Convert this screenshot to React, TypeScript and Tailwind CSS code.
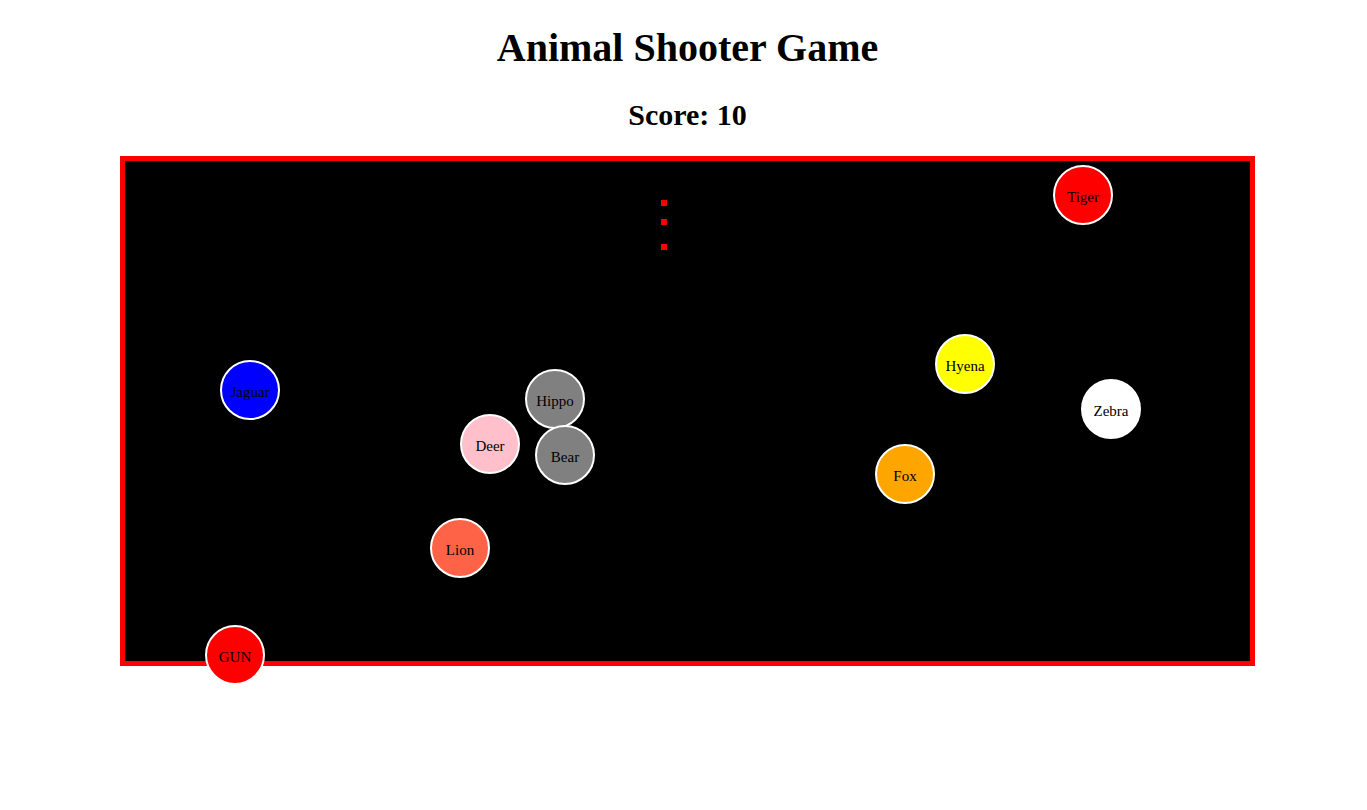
const animals = [
  { name: "Tiger", left: 928, top: 4, bg: "bg-[#ff0000]" },
  { name: "Jaguar", left: 95, top: 199, bg: "bg-[#0000ff]" },
  { name: "Hippo", left: 400, top: 208, bg: "bg-[#808080]" },
  { name: "Deer", left: 335, top: 253, bg: "bg-[#ffc0cb]" },
  { name: "Bear", left: 410, top: 264, bg: "bg-[#808080]" },
  { name: "Lion", left: 305, top: 357, bg: "bg-[#ff6347]" },
  { name: "Hyena", left: 810, top: 173, bg: "bg-[#ffff00]" },
  { name: "Zebra", left: 956, top: 218, bg: "bg-white" },
  { name: "Fox", left: 750, top: 283, bg: "bg-[#ffa500]" },
];

const bullets = [39, 58, 83];

const Ball = ({ name, left, top, bg }: { name: string; left: number; top: number; bg: string }) => (
  <div
    className={`absolute w-[60px] h-[60px] rounded-full border-2 border-white flex items-center justify-center text-[15px] text-black pt-[4px] ${bg}`}
    style={{ left, top }}
  >
    {name}
  </div>
);

export default function App() {
  return (
    <div className="min-h-[810px] bg-white pl-[8px] font-['Liberation_Serif',serif] text-black">
      <h1 className="text-center font-bold text-[40px] leading-none pt-[28px]">Animal Shooter Game</h1>
      <h2 className="text-center font-bold text-[30px] leading-none mt-[32px]">Score: 10</h2>
      <div className="relative mx-auto mt-[26px] w-[1135px] h-[510px] border-[5px] border-[#ff0000] bg-black">
        {bullets.map((t) => (
          <div key={t} className="absolute w-[6px] h-[6px] bg-[#ff0000]" style={{ left: 536, top: t }} />
        ))}
        {animals.map((a) => (
          <Ball key={a.name} {...a} />
        ))}
        <Ball name="GUN" left={80} top={464} bg="bg-[#ff0000]" />
      </div>
    </div>
  );
}
